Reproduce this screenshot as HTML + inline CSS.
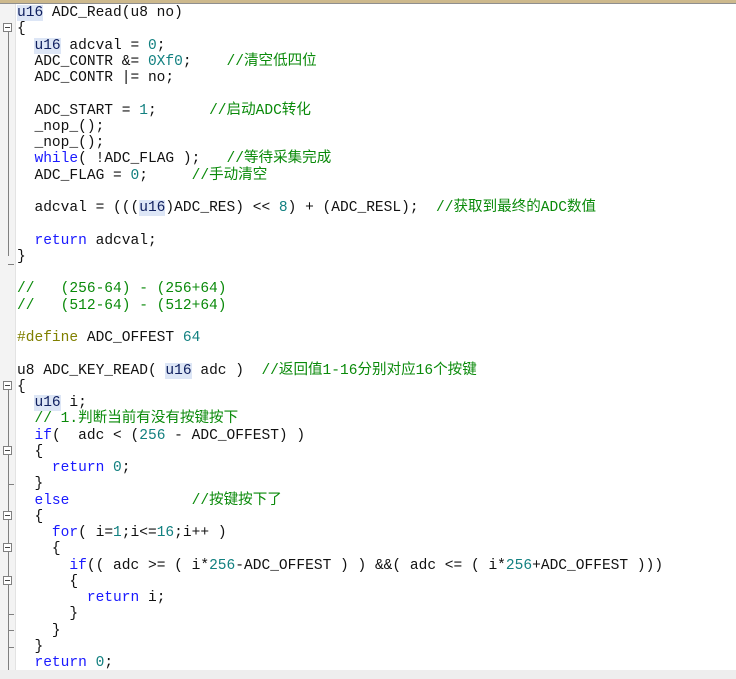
<!DOCTYPE html>
<html><head><meta charset="utf-8"><style>
body{margin:0;width:736px;height:679px;background:#fff;overflow:hidden;position:relative;}
.top{position:absolute;left:0;top:0;width:736px;height:3px;background:#cdb98d;border-bottom:1px solid #8f8f8f}
.gut{position:absolute;left:0;top:4px;width:15px;height:666px;background:#f3f3f3;border-right:1px solid #e3e3e3}
.bot{position:absolute;left:0;top:670px;width:736px;height:9px;background:#eeeeee}
pre{position:absolute;left:17px;top:5px;margin:0;line-height:16.25px;font-size:14.55px;color:#111;font-family:"Liberation Mono","Noto Sans CJK SC",monospace}
.k{color:#1a1aff}.n{color:#128080}.c{color:#0a8a0a}
.t{color:#102060;background:#dde6f6}.p{color:#808000}
.v{position:absolute;left:8px;width:1px;background:#808080}
.tk{position:absolute;left:8px;width:6px;height:1px;background:#808080}
.bx{position:absolute;left:3px;width:9px;height:9px;border:1px solid #808080;background:#fff;box-sizing:border-box}
.bx:after{content:"";position:absolute;left:1px;top:3px;width:5px;height:1px;background:#444}
</style></head><body>
<div class="top"></div>
<div class="gut"></div>
<div class="bot"></div>
<div class="v" style="top:28px;height:228px"></div>
<div class="tk" style="top:264px"></div>
<div class="v" style="top:386px;height:284px"></div>
<div class="tk" style="top:484px"></div>
<div class="tk" style="top:614px"></div>
<div class="tk" style="top:630px"></div>
<div class="tk" style="top:647px"></div>
<div class="bx" style="top:23px"></div>
<div class="bx" style="top:381px"></div>
<div class="bx" style="top:446px"></div>
<div class="bx" style="top:511px"></div>
<div class="bx" style="top:543px"></div>
<div class="bx" style="top:576px"></div>
<pre><span class="t">u16</span> ADC_Read(u8 no)
{
  <span class="t">u16</span> adcval = <span class="n">0</span>;
  ADC_CONTR &amp;= <span class="n">0Xf0</span>;    <span class="c">//清空低四位</span>
  ADC_CONTR |= no;

  ADC_START = <span class="n">1</span>;      <span class="c">//启动ADC转化</span>
  _nop_();
  _nop_();
  <span class="k">while</span>( !ADC_FLAG );   <span class="c">//等待采集完成</span>
  ADC_FLAG = <span class="n">0</span>;     <span class="c">//手动清空</span>

  adcval = (((<span class="t">u16</span>)ADC_RES) &lt;&lt; <span class="n">8</span>) + (ADC_RESL);  <span class="c">//获取到最终的ADC数值</span>

  <span class="k">return</span> adcval;
}

<span class="c">//   (256-64) - (256+64)</span>
<span class="c">//   (512-64) - (512+64)</span>

<span class="p">#define</span> ADC_OFFEST <span class="n">64</span>

u8 ADC_KEY_READ( <span class="t">u16</span> adc )  <span class="c">//返回值1-16分别对应16个按键</span>
{
  <span class="t">u16</span> i;
  <span class="c">// 1.判断当前有没有按键按下</span>
  <span class="k">if</span>(  adc &lt; (<span class="n">256</span> - ADC_OFFEST) )
  {
    <span class="k">return</span> <span class="n">0</span>;
  }
  <span class="k">else</span>              <span class="c">//按键按下了</span>
  {
    <span class="k">for</span>( i=<span class="n">1</span>;i&lt;=<span class="n">16</span>;i++ )
    {
      <span class="k">if</span>(( adc &gt;= ( i*<span class="n">256</span>-ADC_OFFEST ) ) &amp;&amp;( adc &lt;= ( i*<span class="n">256</span>+ADC_OFFEST )))
      {
        <span class="k">return</span> i;
      }
    }
  }
  <span class="k">return</span> <span class="n">0</span>;
</pre>
</body></html>
